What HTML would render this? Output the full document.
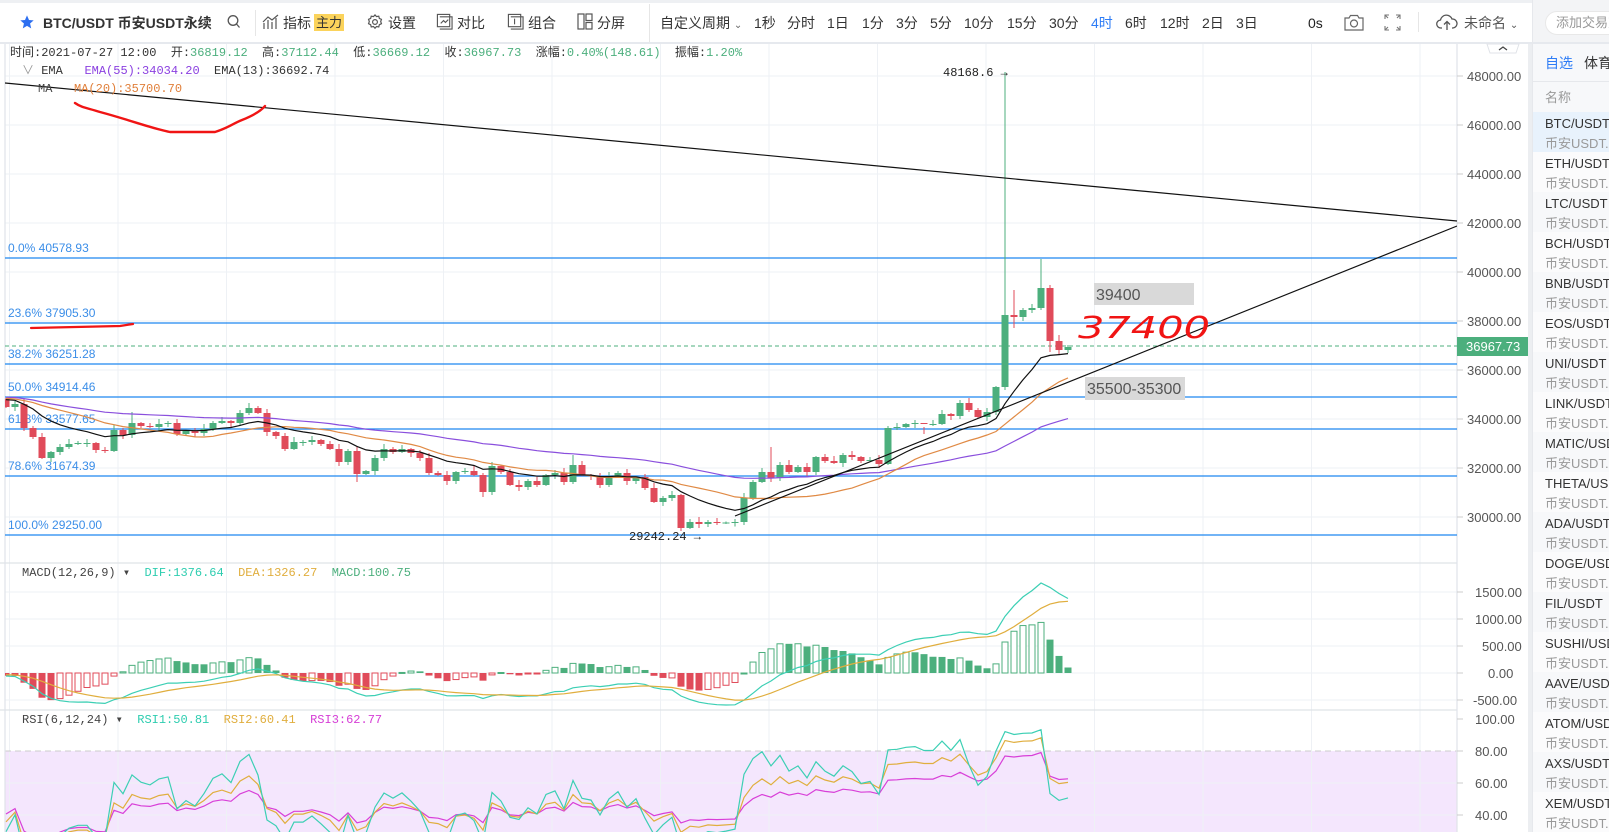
<!DOCTYPE html>
<html><head><meta charset="utf-8">
<style>
*{margin:0;padding:0;box-sizing:border-box}
body{width:1609px;height:832px;overflow:hidden;background:#fff;font-family:"Liberation Sans","Noto Sans CJK SC",sans-serif;position:relative;color:#333}
.a{position:absolute;white-space:nowrap}
.tb{font-size:14px;color:#333;top:14px;line-height:18px}
.mono{font-family:"Liberation Mono","Noto Sans CJK SC",monospace;font-size:12px}
#side{position:absolute;left:1532px;top:0;width:77px;height:832px;background:#f7f8fa;overflow:hidden;border-left:1px solid #e6e8ec}
.row{position:absolute;left:0;width:77px;height:40px;padding-left:12px;font-size:13px;line-height:16px;white-space:nowrap;overflow:hidden}
.row .s{color:#999;margin-top:4px;white-space:nowrap}
</style></head><body>
<!-- top bar -->
<div class="a" style="left:0;top:0;width:1532px;height:3px;background:#eef0f3"></div>
<div class="a" style="left:0;top:42px;width:1532px;height:2px;background:#e6e9ee"></div>
<svg class="a" style="left:19px;top:14px" width="16" height="16" viewBox="0 0 24 24"><path d="M12 2l3 7 7 .6-5.4 4.7 1.7 7.2L12 17.8 5.7 21.5l1.7-7.2L2 9.6 9 9z" fill="#2d6ff0"/></svg>
<div class="a tb" style="left:43px;font-weight:bold">BTC/USDT 币安USDT永续</div>
<svg class="a" style="left:227px;top:14px" width="14" height="16" viewBox="0 0 14 16"><circle cx="6" cy="6.5" r="4.8" fill="none" stroke="#555" stroke-width="1.3"/><path d="M9.5 10l3 3.5" stroke="#555" stroke-width="1.3"/></svg>
<div class="a" style="left:255px;top:10px;width:1px;height:26px;background:#e6e6e6"></div>
<svg class="a" style="left:262px;top:13px" width="18" height="18" viewBox="0 0 18 18" fill="none" stroke="#555" stroke-width="1.2"><path d="M2 16V10M6 16V7M10 16V9M14 16V5M1 9l5-5 4 3 6-5"/></svg>
<div class="a tb" style="left:283px">指标</div>
<div class="a" style="left:314px;top:14px;width:30px;height:17px;background:#fbd35b;font-size:13px;line-height:17px;text-align:center;color:#333">主力</div>
<svg class="a" style="left:366px;top:13px" width="18" height="18" viewBox="0 0 24 24" fill="none" stroke="#555" stroke-width="1.6"><circle cx="12" cy="12" r="3.2"/><path d="M12 2.5l2 2.3 3-.6.8 3 2.8 1.3-1 2.9 1 2.9-2.8 1.3-.8 3-3-.6-2 2.3-2-2.3-3 .6-.8-3-2.8-1.3 1-2.9-1-2.9 2.8-1.3.8-3 3 .6z"/></svg>
<div class="a tb" style="left:388px">设置</div>
<svg class="a" style="left:436px;top:13px" width="17" height="17" viewBox="0 0 18 18" fill="none" stroke="#555" stroke-width="1.2"><rect x="1.5" y="1.5" width="13" height="13"/><path d="M4 4h13v13H4" /><path d="M5 11l3-3 2 2 3-3"/></svg>
<div class="a tb" style="left:457px">对比</div>
<svg class="a" style="left:507px;top:13px" width="17" height="17" viewBox="0 0 18 18" fill="none" stroke="#555" stroke-width="1.2"><rect x="1.5" y="1.5" width="13" height="13"/><path d="M4 4h13v13H4"/><path d="M8 6v6"/></svg>
<div class="a tb" style="left:528px">组合</div>
<svg class="a" style="left:577px;top:13px" width="16" height="17" viewBox="0 0 16 17" fill="none" stroke="#555" stroke-width="1.2"><rect x="1" y="1" width="6" height="15"/><rect x="9" y="1" width="6" height="6.5"/><rect x="9" y="9.5" width="6" height="6.5"/></svg>
<div class="a tb" style="left:597px">分屏</div>
<div class="a" style="left:649px;top:4px;width:1px;height:38px;background:#e6e6e6"></div>
<div class="a tb" style="left:660px">自定义周期 <span style="font-size:10px;color:#666">⌄</span></div>
<div class="a tb" style="left:754px">1秒</div>
<div class="a tb" style="left:787px">分时</div>
<div class="a tb" style="left:827px">1日</div>
<div class="a tb" style="left:862px">1分</div>
<div class="a tb" style="left:896px">3分</div>
<div class="a tb" style="left:930px">5分</div>
<div class="a tb" style="left:964px">10分</div>
<div class="a tb" style="left:1007px">15分</div>
<div class="a tb" style="left:1049px">30分</div>
<div class="a tb" style="left:1091px;color:#2d7cf6">4时</div>
<div class="a tb" style="left:1125px">6时</div>
<div class="a tb" style="left:1160px">12时</div>
<div class="a tb" style="left:1202px">2日</div>
<div class="a tb" style="left:1236px">3日</div>
<div class="a tb" style="left:1308px;color:#222">0s</div>
<svg class="a" style="left:1344px;top:14px" width="20" height="17" viewBox="0 0 20 17" fill="none" stroke="#666" stroke-width="1.2"><path d="M1 4h4l1.5-2.5h7L15 4h4v12H1z"/><circle cx="10" cy="9.5" r="3.5"/></svg>
<svg class="a" style="left:1384px;top:14px" width="17" height="17" viewBox="0 0 17 17" fill="none" stroke="#777" stroke-width="1.1"><path d="M1 5V1h4M12 1h4v4M16 12v4h-4M5 16H1v-4M1 1l3 3M16 1l-3 3M16 16l-3-3M1 16l3-3"/></svg>
<div class="a" style="left:1418px;top:12px;width:1px;height:20px;background:#e6e6e6"></div>
<svg class="a" style="left:1436px;top:13px" width="22" height="18" viewBox="0 0 22 18" fill="none" stroke="#555" stroke-width="1.3"><path d="M6 15H5a4 4 0 0 1-.5-8A6 6 0 0 1 16 6a4.5 4.5 0 0 1 1 9h-1"/><path d="M11 17V9M8 11.5l3-3 3 3"/></svg>
<div class="a tb" style="left:1464px;color:#555">未命名 <span style="font-size:10px">⌄</span></div>

<!-- sidebar -->
<div id="side">
 <div class="a" style="left:0;top:0;width:77px;height:42px;background:#f3f4f6"></div>
 <div class="a" style="left:12px;top:11px;width:90px;height:24px;background:#fff;border:1px solid #e8e8e8;border-radius:12px;font-size:13px;color:#999;line-height:22px;padding-left:10px">添加交易对</div>
 <div class="a" style="left:0;top:42px;width:77px;height:2px;background:#e6e9ee"></div>
 <div class="a" style="left:12px;top:53px;font-size:14px;color:#2d7cf6">自选</div>
 <div class="a" style="left:51px;top:53px;font-size:14px;color:#333">体育</div>
 <div class="a" style="left:0;top:81px;width:77px;height:1px;background:#e6e8ec"></div>
 <div class="a" style="left:12px;top:87px;font-size:13px;color:#999">名称</div>
 <div id="rows"></div>
</div>

<!-- chart svg -->
<svg id="ch" class="a" style="left:0;top:0" width="1532" height="832" xmlns="http://www.w3.org/2000/svg"></svg>

<!-- legends -->
<div class="a mono" style="left:10px;top:45px;line-height:16px">时间:2021-07-27 12:00 &nbsp;开:<span style="color:#4caf7d">36819.12</span> &nbsp;高:<span style="color:#4caf7d">37112.44</span> &nbsp;低:<span style="color:#4caf7d">36669.12</span> &nbsp;收:<span style="color:#4caf7d">36967.73</span> &nbsp;涨幅:<span style="color:#4caf7d">0.40%(148.61)</span> &nbsp;振幅:<span style="color:#4caf7d">1.20%</span></div>
<div class="a mono" style="left:22px;top:63px;line-height:16px"><span style="color:#999">∨</span> EMA &nbsp;&nbsp;<span style="color:#8a3fe0">EMA(55):34034.20</span> &nbsp;EMA(13):36692.74</div>
<div class="a mono" style="left:38px;top:81px;line-height:16px;color:#444">MA &nbsp;&nbsp;<span style="color:#e07f3a">MA(20):35700.70</span></div>
<div class="a mono" style="left:22px;top:565px;line-height:16px;color:#444">MACD(12,26,9) ▾ &nbsp;<span style="color:#2ecdb0">DIF:1376.64</span> &nbsp;<span style="color:#e0ae3e">DEA:1326.27</span> &nbsp;<span style="color:#4caf7d">MACD:100.75</span></div>
<div class="a mono" style="left:22px;top:712px;line-height:16px;color:#444">RSI(6,12,24) ▾ &nbsp;<span style="color:#2ecdb0">RSI1:50.81</span> &nbsp;<span style="color:#e0ae3e">RSI2:60.41</span> &nbsp;<span style="color:#d63ed6">RSI3:62.77</span></div>

<script>
(function(){
var names=["BTC","ETH","LTC","BCH","BNB","EOS","UNI","LINK","MATIC","THETA","ADA","DOGE","FIL","SUSHI","AAVE","ATOM","AXS","XEM"];
var h="";
for(var k=0;k<names.length;k++){var bg=k==0?"#e8f2fc":(k%2?"#fbfbfc":"#f7f8fa");
h+='<div class="row" style="top:'+(112+40*k)+'px;background:'+bg+';padding-top:4px">'+names[k]+'/USDT<div class="s">币安USDT...</div></div>';}
document.getElementById("rows").innerHTML=h;

var C=[407,404,428,437,458,452,447,444,443,443,450,451,430,435,423,426,427,424,423,434,431,433,429,423,421,423,413,408,413,432,436,449,442,442,440,444,449,462,451,474,471,458,449,452,449,453,458,473,475,481,472,471,475,492,466,472,485,487,481,485,475,473,482,465,475,476,485,477,473,481,477,488,502,498,495,528,522,524,522,523,522.5,522,498,482,472,478,465,472,467,472,457,461,463,455,457,461,460,464,428,427,424,423,424,424,414,416,403,410,417,412,387,315,317,310,308,288,341,350,347];
var N=C.length,O=[399],Hh=[],Ll=[];
for(var i=1;i<N;i++)O[i]=C[i-1];
var sp={111:[72,390],115:[259,0],112:[290,328],116:[0,352],117:[335,355],85:[447,0],75:[0,531],98:[0,465],103:[420,0],102:[434,0],14:[412,0],63:[455,0],39:[0,482],53:[0,497]};
for(i=0;i<N;i++){var t=Math.min(O[i],C[i]),b=Math.max(O[i],C[i]);Hh[i]=t-(1+(i*7)%5);Ll[i]=b+(1+(i*11)%4);
 if(sp[i]){if(sp[i][0])Hh[i]=sp[i][0];if(sp[i][1])Ll[i]=sp[i][1];}}
function X(i){return 6+9*i;}
function P(y){return 48000-(y-76)/0.0245;}
var pre=[];for(var k=0;k<80;k++)pre.push(398+5*Math.sin(k*0.6)+ (80-k)*-0.05);
var all=pre.concat(C);var M=all.length,off=pre.length;
function ema(a,n){var r=[a[0]],al=2/(n+1);for(var j=1;j<a.length;j++)r[j]=al*a[j]+(1-al)*r[j-1];return r;}
function sma(a,n){var r=[];for(var j=0;j<a.length;j++){var s=0,c=0;for(var q=Math.max(0,j-n+1);q<=j;q++){s+=a[q];c++;}r[j]=s/c;}return r;}
var e13=ema(all,13),e55=ema(all,55),m20=sma(all,20);
var pr=all.map(P),e12=ema(pr,12),e26=ema(pr,26),dif=[];for(i=0;i<M;i++)dif[i]=e12[i]-e26[i];
var dea=ema(dif,9),hist=[];for(i=0;i<M;i++)hist[i]=2*(dif[i]-dea[i]);
function rsi(n){var u=0,d=0,r=[50];for(var j=1;j<M;j++){var df=pr[j]-pr[j-1];u=(Math.max(df,0)+(n-1)*u)/n;d=(Math.abs(df)+(n-1)*d)/n;r[j]=d?u/d*100:50;}return r;}
var r6=rsi(6),r12=rsi(12),r24=rsi(24);
function path(a,fy){var s="";for(var i=0;i<N;i++){s+=(i?"L":"M")+X(i)+" "+fy(a[i+off]).toFixed(1);}return s;}
var id=function(v){return v};
var my=function(v){return 673-v*0.054};
var ry=function(v){return 719+(100-v)*1.6};
var s='<defs><clipPath id="cm"><rect x="5" y="44" width="1452" height="519"/></clipPath><clipPath id="cd"><rect x="5" y="564" width="1452" height="146"/></clipPath><clipPath id="cr"><rect x="5" y="711" width="1452" height="121"/></clipPath></defs>';
s+='<rect x="5" y="751" width="1452" height="81" fill="#f4e6fd"/>';
var g="";
for(var k=0;k<14;k++){var gx=9.5+108.5*k;g+='M'+gx+' 44V832';}
for(k=0;k<10;k++){var gy=76+49*k;g+='M5 '+gy+'H1457';}
[592,619,646,673,700,783,815].forEach(function(v){g+='M5 '+v+'H1457';});
s+='<path d="'+g+'" stroke="#eef1f5" stroke-width="1" fill="none"/>';
s+='<path d="M5 751H1457" stroke="#ccc" stroke-dasharray="6,4"/>';
s+='<path d="M5 44V832M0 563H1457M0 710H1457M1457 44V832" stroke="#dfe3e8" stroke-width="1.2" fill="none"/>';
s+='<rect x="1528" y="44" width="4" height="788" fill="#eceef1"/>';
var ax="";
for(k=0;k<10;k++){var v=48000-2000*k,yy=76+49*k;ax+='<text x="1467" y="'+(yy+5)+'">'+v+'.00</text><path d="M1457 '+yy+'h6" stroke="#ccc"/>';}
[[1500,592,1475],[1000,619,1475],[500,646,1482],[0,673,1488],[-500,700,1473]].forEach(function(a){ax+='<text x="'+a[2]+'" y="'+(a[1]+5)+'">'+(a[0]).toFixed(2)+'</text><path d="M1457 '+a[1]+'h6" stroke="#ccc"/>';});
[[100,719],[80,751],[60,783],[40,815]].forEach(function(a){ax+='<text x="1475" y="'+(a[1]+5)+'">'+a[0]+'.00</text><path d="M1457 '+a[1]+'h6" stroke="#ccc"/>';});
s+='<g font-family="Liberation Sans" font-size="13" fill="#555">'+ax+'</g>';
s+='<path d="M1487 44h32l-3 9h-26z" fill="#fff" stroke="#e0e3e8"/><path d="M1499 50l4-3 4 3" stroke="#444" fill="none" stroke-width="1.3"/>';
var fib=[["0.0% 40578.93",258],["23.6% 37905.30",323],["38.2% 36251.28",364],["50.0% 34914.46",397],["61.8% 33577.65",429],["78.6% 31674.39",476],["100.0% 29250.00",535]];
var fl="",ft="";fib.forEach(function(f){fl+='M5 '+f[1]+'H1457';ft+='<text x="8" y="'+(f[1]-6)+'">'+f[0]+'</text>';});
s+='<path d="'+fl+'" stroke="#1e88f0" stroke-width="1.2" fill="none"/>';
s+='<g font-family="Liberation Sans" font-size="12" fill="#3b8ee8">'+ft+'</g>';
s+='<path d="M5 346H1457" stroke="#4caf7d" stroke-dasharray="4,3"/>';
s+='<rect x="1457" y="337" width="71" height="19" fill="#4caf7d"/><text x="1466" y="351" font-family="Liberation Sans" font-size="13" fill="#fff">36967.73</text>';
var cg="";
for(i=0;i<N;i++){var up=C[i]<=O[i],col=up?"#4caf7d":"#e04b5a",x=X(i),t=Math.min(O[i],C[i]),hh=Math.max(1,Math.abs(C[i]-O[i]));
 cg+='<path d="M'+x+' '+Hh[i]+'V'+Ll[i]+'" stroke="'+col+'"/><rect x="'+(x-3.5)+'" y="'+t+'" width="7" height="'+hh+'" fill="'+col+'"/>';}
s+='<g clip-path="url(#cm)">'+cg;
s+='<path d="'+path(e55,id)+'" stroke="#8a4fdd" stroke-width="1.2" fill="none"/>';
s+='<path d="'+path(m20,id)+'" stroke="#e08a45" stroke-width="1.2" fill="none"/>';
s+='<path d="'+path(e13,id)+'" stroke="#111" stroke-width="1.2" fill="none"/>';
s+='<path d="M5 83L1457 221M735 516L1457 226" stroke="#111" stroke-width="1.2" fill="none"/>';
s+='</g>';
s+='<text x="943" y="76" font-family="Liberation Mono" font-size="12" fill="#222">48168.6 →</text>';
s+='<text x="629" y="540" font-family="Liberation Mono" font-size="12" fill="#222">29242.24 →</text>';
s+='<rect x="1094" y="283" width="100" height="22" fill="#d9d9d9"/><text x="1096" y="300" font-family="Liberation Sans" font-size="16" fill="#555">39400</text>';
s+='<rect x="1085" y="377" width="100" height="23" fill="#d9d9d9"/><text x="1087" y="394" font-family="Liberation Sans" font-size="16" fill="#555">35500-35300</text>';
s+='<text x="1078" y="338" font-family="DejaVu Sans" font-style="italic" font-size="30" fill="#f01414" textLength="132" lengthAdjust="spacingAndGlyphs">37400</text>';
s+='<path d="M75 103C82 108 88 108 100 112C130 120 150 128 170 132L215 132C228 128 232 124 242 120C252 116 260 112 265 106" stroke="#f01414" stroke-width="2.4" fill="none" stroke-linecap="round"/>';
s+='<path d="M31 328L120 326L133 324" stroke="#f01414" stroke-width="2.2" fill="none" stroke-linecap="round"/>';
var hb="";
for(i=0;i<N;i++){var v=hist[i+off],pv=hist[i+off-1],x=X(i),y0=673,y1=my(v),col=v>=0?"#4caf7d":"#e04b5a",hol=v>pv;
 var yt=Math.min(y0,y1),hh=Math.max(1,Math.abs(y1-y0));
 if(hol)hb+='<rect x="'+(x-3)+'" y="'+yt+'" width="6" height="'+hh+'" fill="#fff" stroke="'+col+'"/>';
 else hb+='<rect x="'+(x-3.5)+'" y="'+yt+'" width="7" height="'+hh+'" fill="'+col+'"/>';}
s+='<g clip-path="url(#cd)">'+hb+'<path d="'+path(dif,my)+'" stroke="#3ccfb4" stroke-width="1.2" fill="none"/><path d="'+path(dea,my)+'" stroke="#e0ae3e" stroke-width="1.2" fill="none"/></g>';
s+='<g clip-path="url(#cr)" fill="none" stroke-width="1.2"><path d="'+path(r24,ry)+'" stroke="#d83fd8"/><path d="'+path(r12,ry)+'" stroke="#e0ae3e"/><path d="'+path(r6,ry)+'" stroke="#3ccfb4"/></g>';
document.getElementById("ch").innerHTML=s;
})();
</script>
</body></html>
